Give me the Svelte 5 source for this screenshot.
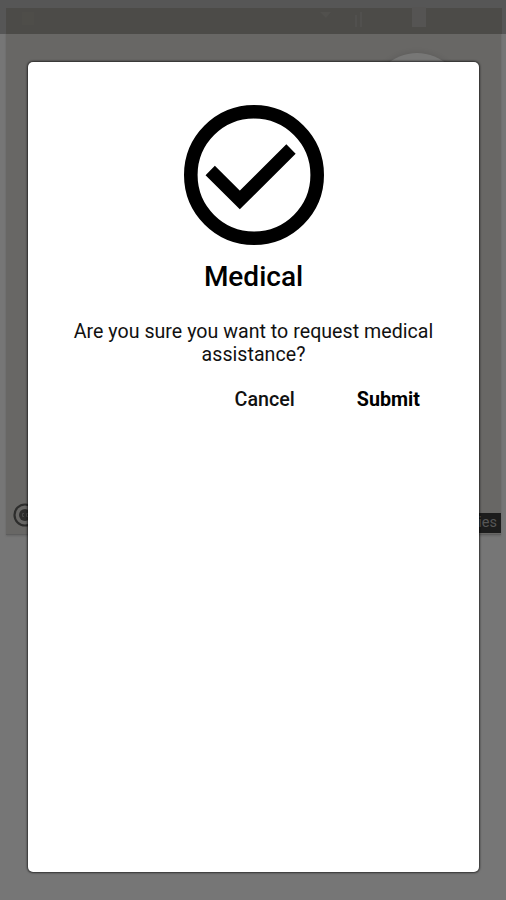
<script>
  let title = "Medical";
  let message = "Are you sure you want to request medical assistance?";
  let open = true;

  const close = () => {
    open = false;
  };
</script>

<div class="screen">
  <div class="map">
    <div class="compass"></div>
    <svg class="logo" viewBox="0 0 24 24">
      <circle cx="12" cy="12" r="10.5" fill="none" stroke="#2d2d2c" stroke-width="2.2" />
      <circle cx="12" cy="12" r="6" fill="#2d2d2c" />
      <path d="M11 10.5H9.5v3H11M15 10.5h-1.5v3H15" fill="none" stroke="#4a4a49" stroke-width="1" />
    </svg>
    <span class="notes">ies</span>
  </div>
  <div class="status-bar">
    <svg viewBox="0 0 506 34">
      <rect x="6" y="8" width="496" height="26" fill="#4c4b48" />
      <path d="M22 12h12v13h-12z" fill="#4e4d49" />
      <path d="M320 12h11l-5 6z" fill="#51504d" />
      <path d="M356 15v12M361 12v15" stroke="#51504e" stroke-width="2" />
      <rect x="412" y="7" width="14" height="20" fill="#555453" />
    </svg>
  </div>

  {#if open}
    <div class="dialog">
      <svg class="check" viewBox="0 0 140 140">
        <circle cx="70" cy="70" r="63.2" fill="none" stroke="#000" stroke-width="13.6" />
        <path d="M26.2 65.5L55.8 95L107 44" fill="none" stroke="#000" stroke-width="13.2" />
      </svg>
      <h2>{title}</h2>
      <p>{message}</p>
      <div class="actions">
        <button class="cancel" on:click={close}>Cancel</button>
        <button class="submit" on:click={close}>Submit</button>
      </div>
    </div>
  {/if}
</div>

<style>
  :global(body) {
    margin: 0;
    background: #767676;
  }
  .screen {
    position: relative;
    width: 506px;
    height: 900px;
    box-sizing: border-box;
    padding: 62px 27px 27px 28px;
    overflow: hidden;
    background: #767676;
    font-family: Roboto, sans-serif;
  }
  .map {
    position: absolute;
    top: 8px;
    left: 6px;
    width: 495px;
    height: 526px;
    overflow: hidden;
    background: #686765;
    border-bottom: 1px solid #5d5d5d;
    box-shadow: 0 1px 2px rgba(0, 0, 0, 0.15);
  }
  .compass {
    position: absolute;
    top: 45px;
    left: 365px;
    width: 92px;
    height: 92px;
    border-radius: 50%;
    background: #777776;
    box-shadow: 0 0 6px rgba(0, 0, 0, 0.12);
  }
  .logo {
    position: absolute;
    left: 7px;
    top: 495px;
    width: 24px;
    height: 24px;
  }
  .notes {
    position: absolute;
    right: 0;
    bottom: 1px;
    width: 60px;
    height: 20px;
    padding-right: 4px;
    box-sizing: border-box;
    background: #1c1c1c;
    color: #565656;
    font-size: 14.5px;
    line-height: 20px;
    text-align: right;
  }
  .status-bar {
    position: absolute;
    top: 0;
    left: 0;
    width: 506px;
    height: 34px;
    background: #565656;
  }
  .status-bar svg {
    display: block;
    width: 506px;
    height: 34px;
  }
  .dialog {
    position: relative;
    height: 810px;
    box-sizing: border-box;
    padding: 42.5px 36px 0;
    display: flex;
    flex-direction: column;
    align-items: center;
    background: #fff;
    border-radius: 5px;
    box-shadow: 0 0 2px 1px rgba(0, 0, 0, 0.6);
    color: #000;
  }
  .check {
    display: block;
    width: 140px;
    height: 140px;
  }
  h2 {
    margin: 15px 0 0;
    font-size: 28px;
    font-weight: 500;
    line-height: 34px;
    letter-spacing: 0;
  }
  p {
    margin: 26.5px 0 0;
    font-size: 19.6px;
    line-height: 23px;
    letter-spacing: 0.03px;
    text-align: center;
    color: #111;
  }
  .actions {
    align-self: stretch;
    display: flex;
    justify-content: flex-end;
    gap: 62px;
    margin-top: 21.5px;
    padding-right: 23px;
  }
  button {
    padding: 0;
    border: none;
    background: none;
    color: #111;
    font-family: inherit;
    font-size: 19.7px;
    font-weight: 500;
    line-height: 24px;
    cursor: pointer;
  }
  .submit {
    font-weight: 700;
    color: #000;
  }
</style>
